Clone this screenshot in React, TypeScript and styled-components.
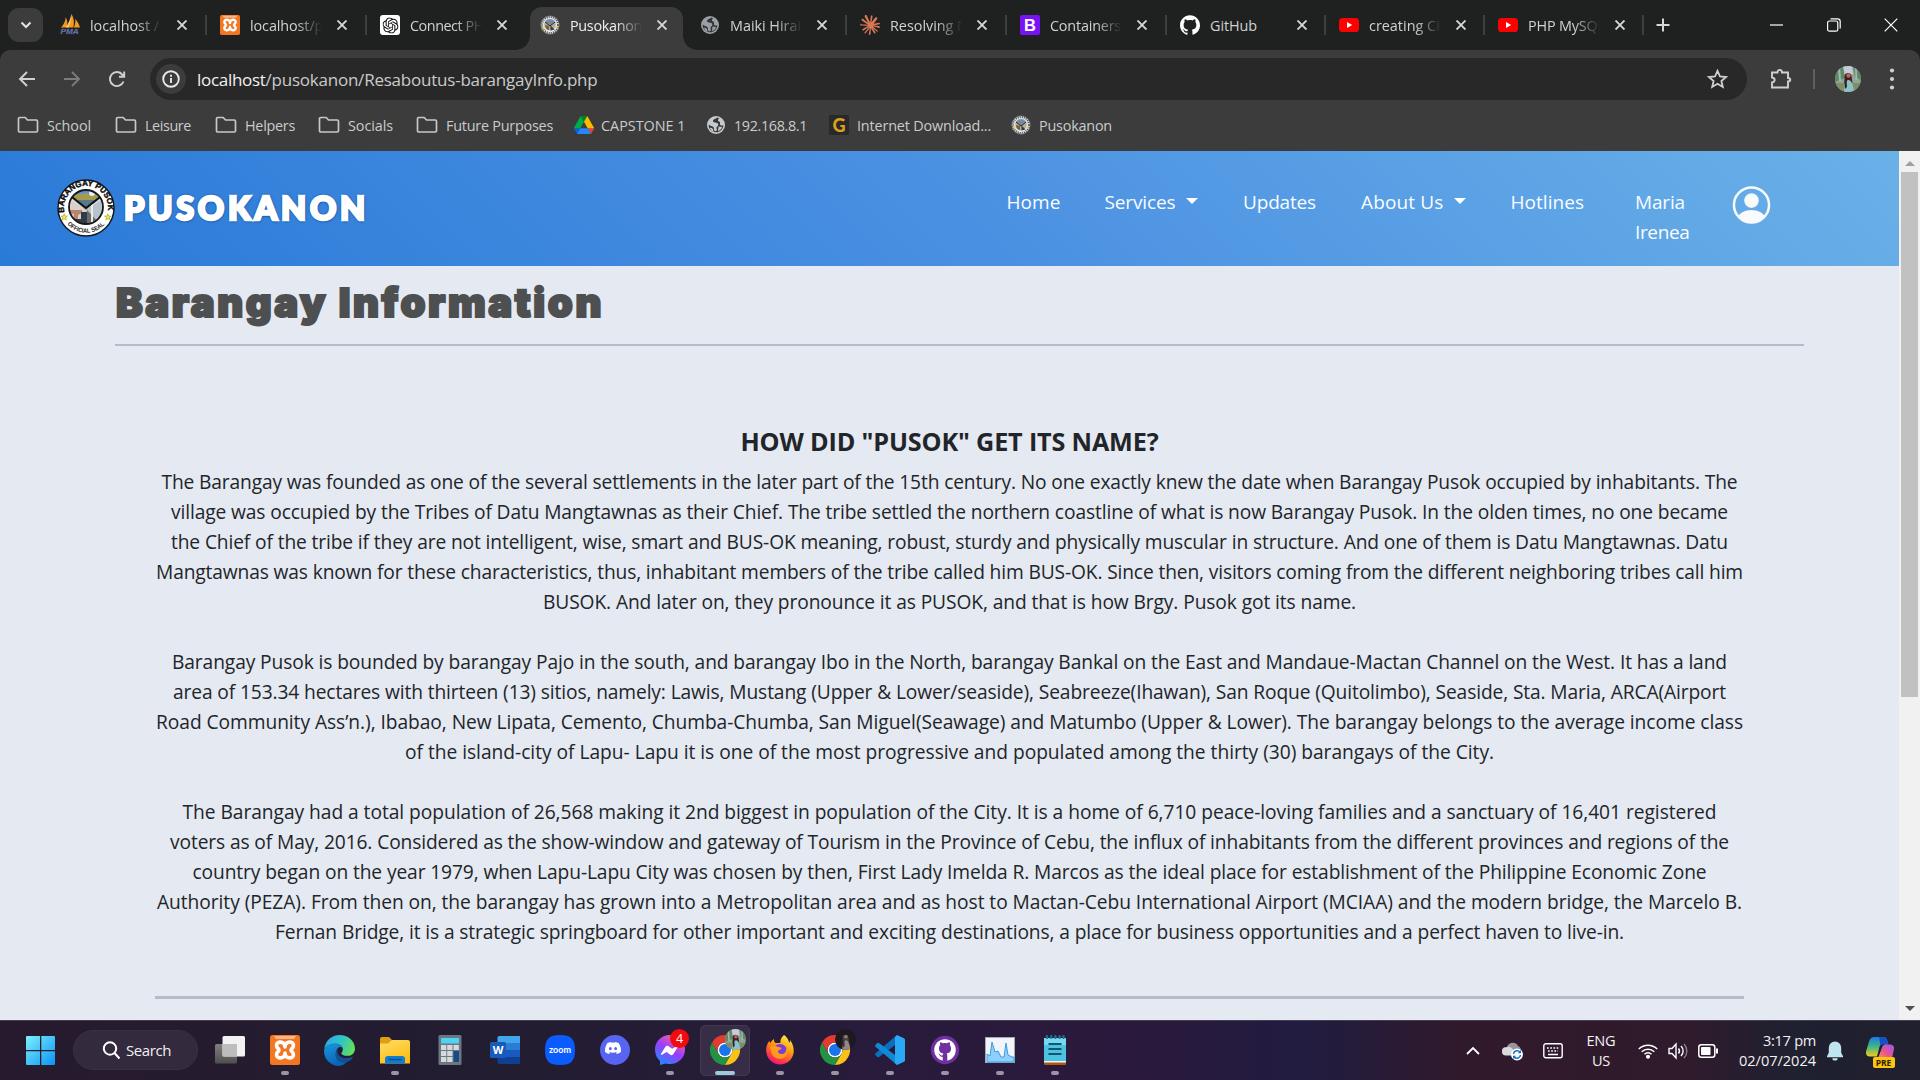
import React, { useLayoutEffect, useRef, useState } from "react";
import styled, { createGlobalStyle, css } from "styled-components";
import { SiOpenai, SiGithub, SiDiscord, SiClaude } from "react-icons/si";

const UI = `"Open Sans", "Noto Sans", sans-serif`;

const Global = createGlobalStyle`
  * { box-sizing: border-box; }
  html, body { margin: 0; padding: 0; height: 100%; overflow: hidden; }
  body { font-family: ${UI}; background: #e5e9f1; }
  svg { display: block; flex: none; }
`;

/* ---------- text that tracks itself to a given measure ---------- */

const FitBox = styled.span<{ $w: number }>`
  display: block;
  width: ${(p) => p.$w}px;
  white-space: nowrap;
  flex: none;
`;
const FitInner = styled.span`
  display: inline-block;
  white-space: nowrap;
`;

function Fit({ w, children }: { w: number; children: string }) {
  const ref = useRef<HTMLSpanElement>(null);
  const [spacing, setSpacing] = useState(0);
  useLayoutEffect(() => {
    if (!ref.current) return;
    const natural = ref.current.getBoundingClientRect().width;
    setSpacing((w - natural) / children.length);
  }, [w, children]);
  return (
    <FitBox $w={w}>
      <FitInner ref={ref} style={{ letterSpacing: `${spacing}px` }}>{children}</FitInner>
    </FitBox>
  );
}

/* ---------- icons ---------- */

const Seal = ({ size }: { size: number }) => (
  <svg width={size} height={size} viewBox="0 0 58 58">
    <defs>
      <path id="sealTop" d="M8.100 35.800 A22 22 0 1 1 49.900 35.800" />
      <path id="sealBottom" d="M5.700 37.500 A24.800 24.800 0 0 0 52.300 37.500" />
      <clipPath id="sealClip"><circle cx="29" cy="28" r="17" /></clipPath>
    </defs>
    <circle cx="29" cy="29" r="28" fill="#fff" stroke="#15171b" strokeWidth="1.400" />
    <g clipPath="url(#sealClip)">
      <rect x="10" y="8" width="38" height="40" fill="#e4dfdc" />
      <path d="M13 8h32v10L29 31 13 18z" fill="#5a8fe0" />
      <path d="M14 18c6-5 10-2 15-4 5 1 9 0 14 3L29 31z" fill="#a59a4e" />
      <path d="M20 21h18l-9 9z" fill="#557a8b" />
      <circle cx="35" cy="14" r="3" fill="#e8eefc" />
      <path d="M11 19l18 12v16H11z" fill="#d9cfcb" />
      <path d="M12 31h13v3l-4 2v4h-4v-5l-5-1z" fill="#b98470" />
      <path d="M11 40h18v8H11z" fill="#453a34" />
      <path d="M47 19L29 31v16h18z" fill="#b9c3cc" />
      <path d="M30 31l14 15H30z" fill="#6e6a66" />
      <path d="M34 26l2-2v20h-2z" fill="#e9eaec" />
      <path d="M24 33h6v12h-6z" fill="#2d3b4c" />
    </g>
    <path d="M15 18l14 11 14-11" fill="none" stroke="#111" strokeWidth="1.800" />
    <circle cx="29" cy="28" r="17" fill="none" stroke="#15171b" strokeWidth="1.800" />
    <text fontFamily="Liberation Sans" fontWeight="700" fontSize="8.200" fill="#0b0b0b" stroke="#0b0b0b" strokeWidth=".4">
      <textPath href="#sealTop" startOffset="2.500" textLength="76" lengthAdjust="spacingAndGlyphs">BARANGAY PUSOK</textPath>
    </text>
    <text fontFamily="Liberation Sans" fontWeight="700" fontSize="6.200" fill="#222">
      <textPath href="#sealBottom" startOffset="9" textLength="42" lengthAdjust="spacingAndGlyphs">OFFICIAL SEAL</textPath>
    </text>
    {[7.200, 50.800].map((x) => (
      <path key={x} transform={`translate(${x} 38)`} d="M0-3.200l.9 2.200 2.400.1-1.900 1.500.7 2.400L0 1.700-2.100 3l.7-2.400-1.900-1.500 2.400-.1z" fill="#f4ee25" stroke="#77721e" strokeWidth=".4" />
    ))}
  </svg>
);

const MiniSeal = () => (
  <svg width="20" height="20" viewBox="0 0 20 20">
    <circle cx="10" cy="10" r="9.300" fill="#e8e8e8" stroke="#55585c" strokeWidth=".8" />
    <circle cx="10" cy="10" r="7.900" fill="none" stroke="#4b4b4b" strokeWidth="1.800" strokeDasharray="1 1.100" />
    <circle cx="10" cy="9.600" r="5.800" fill="#b0aca8" />
    <path d="M5.300 6.500a6 6 0 0 1 9.400 0l-4.700 4z" fill="#5f90dc" />
    <path d="M6 7c2-1.500 3-.5 4-.8l3 .8-3 3z" fill="#8d8a55" />
    <path d="M5 10l4 1v4c-2 0-4-2-4-5z" fill="#7a5d45" />
    <path d="M10.500 10.500l4 4-4 1z" fill="#35393f" />
    <path d="M5 7l5 4 5-4" stroke="#222" fill="none" />
    <path d="M2.500 11.500h2v2h-2zM15.500 11.500h2v2h-2z" fill="#e6dc3a" />
  </svg>
);

const Pma = () => (
  <svg width="20" height="22" viewBox="0 0 21 23">
    <path d="M1 14C4 11 6 7 6 3c2 4 2 7 1 11zM7 14c3-4 5-9 5-14 3 5 3 10 2 14zM14.500 14c1.500-3 2-6 1.500-9 2.500 3 4 6 5 9z" fill="#f39a1f" />
    <path d="M12 0c-1 5-3 10-6 14h3c2-4 3-9 3-14z" fill="#f9c77a" />
    <text x=".5" y="21" fontFamily="Liberation Sans" fontWeight="700" fontStyle="italic" fontSize="8" textLength="19" lengthAdjust="spacingAndGlyphs" fill="#7f8bcb" stroke="#3d4478" strokeWidth=".3">PMA</text>
  </svg>
);

const Xampp = ({ size }: { size: number }) => (
  <svg width={size} height={size} viewBox="0 0 30 30">
    <rect width="30" height="30" rx="2.500" fill="#f37623" />
    <path d="M4 1h22l-2 3H6z" fill="#fbb686" />
    <path
      d="M15 12C15 6 6.500 5.500 6.500 10.500C6.500 13 9 13.500 9 15C9 16.500 6.500 17 6.500 19.500C6.500 24.500 15 24 15 18C15 24 23.500 24.500 23.500 19.500C23.500 17 21 16.500 21 15C21 13.500 23.500 13 23.500 10.500C23.500 5.500 15 6 15 12z"
      fill="none" stroke="#fff" strokeWidth="3.600" strokeLinejoin="round"
    />
  </svg>
);

const Globe = ({ color }: { color: string }) => (
  <svg width="20" height="20" viewBox="0 0 20 20">
    <circle cx="10" cy="10" r="9" fill={color} />
    <path d="M11.500 2.600C9 4.200 8 4 7.200 5.200c-.8 1.300.3 2 1.900 2.300 1.700.3 3 .4 3.200 1.900.2 1.700-1.600 1.700-1.800 3-.1 1.200 1 2.300-.3 3.600-.8.800-1.700.2-2-.8-.5-1.600.2-2.300-.9-3.300C6 10.900 4 11 2.700 9.500 2.400 13 5 17.300 10 17.300c4.200 0 7.300-3.300 7.300-7.300-1 .8-2.100.9-3-.1-.9-1.200.2-1.800-.5-2.900-.7-1-1.900-.5-1.900-1.800 0-.8.500-1.300 1.500-1.500z" fill="#343739" />
    <path d="M4 13c1.500-.6 3 .5 3.200 2l.3 2C6 16.400 4.700 15 4 13zM12.500 11.500l3.500.5c-.3 2-2 3.500-4 4.300z" fill={color} />
  </svg>
);

const Bootstrap = () => (
  <svg width="20" height="20" viewBox="0 0 20 20">
    <rect width="20" height="20" rx="2" fill="#7a12f6" />
    <text x="10" y="15.800" textAnchor="middle" fontFamily="Liberation Sans" fontWeight="700" fontSize="16.500" fill="#fff">B</text>
  </svg>
);

const YouTube = () => (
  <svg width="20" height="20" viewBox="0 0 20 20">
    <rect y="3" width="20" height="14" rx="3.600" fill="#f00" />
    <path d="M8 7l5.200 3L8 13z" fill="#fff" />
  </svg>
);

const Openai = () => (
  <svg width="20" height="20" viewBox="0 0 20 20">
    <rect width="20" height="20" rx="3" fill="#fff" />
    <SiOpenai x="2.500" y="2.500" width="15" height="15" color="#111" />
  </svg>
);

const Folder = () => (
  <svg width="22" height="18" viewBox="0 0 22 18" fill="none" stroke="#c7c7c7" strokeWidth="1.700" strokeLinejoin="round">
    <path d="M1.500 2.800c0-.8.500-1.300 1.300-1.300h5.400l2.300 2.500h8.700c.8 0 1.300.5 1.300 1.300v9.400c0 .8-.5 1.300-1.300 1.300H2.800c-.8 0-1.300-.5-1.300-1.300z" />
  </svg>
);

const Drive = () => (
  <svg width="20" height="18" viewBox="0 0 87.300 78">
    <path d="M6.600 66.850l3.850 6.650c.8 1.400 1.950 2.500 3.300 3.300L27.500 53H0c0 1.550.4 3.100 1.200 4.500z" fill="#0066da" />
    <path d="M43.650 25L29.900 1.200c-1.350.8-2.500 1.900-3.300 3.300L1.200 48.500C.4 49.900 0 51.450 0 53h27.500z" fill="#00ac47" />
    <path d="M73.550 76.800c1.350-.8 2.500-1.900 3.300-3.300l1.600-2.750L86.100 57.500c.8-1.400 1.200-2.950 1.200-4.500H59.800l5.850 11.500z" fill="#ea4335" />
    <path d="M43.650 25L57.400 1.200C56.050.4 54.500 0 52.900 0H34.400c-1.600 0-3.150.45-4.500 1.200z" fill="#00832d" />
    <path d="M59.800 53H27.500L13.750 76.800c1.350.8 2.900 1.200 4.500 1.200h50.800c1.600 0 3.150-.45 4.500-1.200z" fill="#2684fc" />
    <path d="M73.400 26.500l-12.700-22c-.8-1.400-1.950-2.500-3.300-3.300L43.650 25 59.800 53h27.450c0-1.550-.4-3.100-1.200-4.500z" fill="#ffba00" />
  </svg>
);

const GIcon = () => (
  <svg width="20" height="20" viewBox="0 0 20 20">
    <rect width="20" height="20" rx="1" fill="#29292b" />
    <text x="10" y="16.500" textAnchor="middle" fontFamily="Lato" fontWeight="900" fontSize="18" fill="#dba21a">G</text>
  </svg>
);

const Cross = ({ s = 10, c = "#d6d8d8", w = 1.9 }: { s?: number; c?: string; w?: number }) => (
  <svg width={s} height={s} viewBox="0 0 10 10"><path d="M.5.5l9 9M9.500.5l-9 9" stroke={c} strokeWidth={(w * 10) / s} /></svg>
);

const Photo = ({ size, dark }: { size: number; dark?: boolean }) => (
  <svg width={size} height={size} viewBox="0 0 26 26">
    <defs><clipPath id={dark ? "phD" : "phL"}><circle cx="13" cy="13" r="13" /></clipPath></defs>
    <g clipPath={`url(#${dark ? "phD" : "phL"})`}>
      <rect width="26" height="26" fill={dark ? "#1d191f" : "#8fa596"} />
      {!dark && <path d="M0 0h8l2 12-10 4zM18 0h8v14l-6-3z" fill="#5d8a62" />}
      {!dark && <path d="M8 0h9l1 8-8 2z" fill="#c3ccd8" />}
      {!dark && <path d="M3 0h2l1 15H4zM20 0h1.500l1 14h-2z" fill="#a8b4ba" />}
      {!dark && <path d="M0 17h26v9H0z" fill="#7d8f66" />}
      <path d="M9.500 10c0-4 7-4 7 0l1 7h-8z" fill={dark ? "#4b4145" : "#3a2426"} />
      <circle cx="13.500" cy="9.500" r="2.200" fill={dark ? "#8d7d7d" : "#c25f55"} />
      <path d="M9 26c0-8 2-12 4.500-12s5 4 5.500 12z" fill={dark ? "#92868a" : "#8fc0c6"} />
      <path d="M9.500 15l2-3 .5 9-2 2z" fill={dark ? "#3a3236" : "#2c2226"} />
    </g>
  </svg>
);

const Chrome = () => (
  <svg width="30" height="30" viewBox="0 0 48 48">
    <circle cx="24" cy="24" r="12" fill="#fff" />
    <path d="M3.200 36A24 24 0 0 0 24 48l10.400-18A12 12 0 0 1 13.600 30L3.200 12a24 24 0 0 0 0 24z" fill="#229342" />
    <path d="M24 48a24 24 0 0 0 20.800-36H24a12 12 0 0 1 10.400 18z" fill="#fbc116" />
    <path d="M44.800 12a24 24 0 0 0-41.600 0l10.400 18A12 12 0 0 1 24 12z" fill="#e33b2e" />
    <circle cx="24" cy="24" r="9.500" fill="#1a73e8" />
  </svg>
);

const Start = () => (
  <svg width="30" height="30" viewBox="0 0 30 30">
    <defs><linearGradient id="win" x1="0" y1="0" x2="1" y2="1" gradientUnits="objectBoundingBox"><stop stopColor="#7df0fd" /><stop offset="1" stopColor="#0a93f5" /></linearGradient></defs>
    <path d="M1 0h13v14H0V1a1 1 0 0 1 1-1zM15.300 0H28a1 1 0 0 1 1 1v13H15.300zM0 15.300h14V29H1a1 1 0 0 1-1-1zM15.300 15.300H29V28a1 1 0 0 1-1 1H15.300z" fill="url(#win)" />
  </svg>
);
const TaskView = () => (
  <svg width="30" height="30" viewBox="0 0 30 30">
    <defs><linearGradient id="tv" x1="0" y1="0" x2="0" y2="1"><stop stopColor="#808080" /><stop offset="1" stopColor="#4f4f4f" /></linearGradient></defs>
    <rect y="9" width="22" height="19.500" rx="1.500" fill="url(#tv)" />
    <rect x="7.500" y="1" width="22.500" height="20.500" rx="1.500" fill="#f2f2f2" />
    <path d="M7.500 9H22v12.500H9a1.500 1.500 0 0 1-1.500-1.500z" fill="#bdbdbd" />
  </svg>
);
const Edge = () => (
  <svg width="31" height="31" viewBox="0 0 30 30">
    <defs>
      <linearGradient id="e1" x1="0" y1=".3" x2="1" y2=".6"><stop stopColor="#2aa9e6" /><stop offset=".5" stopColor="#2fc4c9" /><stop offset="1" stopColor="#66e052" /></linearGradient>
      <linearGradient id="e2" x1="0" y1="0" x2=".4" y2="1"><stop stopColor="#1799df" /><stop offset="1" stopColor="#0c62b5" /></linearGradient>
    </defs>
    <path d="M.3 13.300C1.300 5.500 7.500 0 15 0c8.500 0 15 6 15 13.200 0 4-3.200 7-7.200 7-4.200 0-6-1.700-6-2.600 0-.6 1.400-1.300 1.400-3.600 0-3.200-3-5.500-7-5.500-5 0-9 2-10.900 4.800z" fill="url(#e1)" />
    <path d="M.1 14.200C1.500 10.500 6 8.500 11 8.500c3.600 0 6.200 1.700 7 3.700-1.200-.8-3-.9-4.300.2-3.700 3.300-1.700 12.600 8.600 13.100C20 28.500 17.500 30 14.700 30 6.500 30-.6 23.500.1 14.200z" fill="url(#e2)" />
    <path d="M13.500 12.600c-4.700 4.400-2.600 13.600 5 14.200 4 .3 7.500-1.600 9.500-5 .3-.6-.2-1-.7-.7-5.600 2.700-13.700.9-14.300-4.600-.1-1.500.1-3 .5-3.900z" fill="#124f95" />
  </svg>
);
const Explorer = () => (
  <svg width="30" height="30" viewBox="0 0 30 30">
    <defs><linearGradient id="fx" x1="0" y1="0" x2=".5" y2="1"><stop stopColor="#ffdc66" /><stop offset="1" stopColor="#fdbf17" /></linearGradient></defs>
    <path d="M0 4a2 2 0 0 1 2-2h7l3.500 3.500L9 10H0z" fill="#e39d10" />
    <path d="M0 8.500h8L12 5h16a2 2 0 0 1 2 2v21.500H0z" fill="url(#fx)" />
    <path d="M5 28.500V24a3 3 0 0 1 3-3h14a3 3 0 0 1 3 3v4.500z" fill="#0f7dd2" />
    <path d="M9 24.500h12" stroke="#0a4d93" strokeWidth="1.400" strokeLinecap="round" />
  </svg>
);
const Calc = () => (
  <svg width="24" height="30" viewBox="0 0 24 30">
    <rect x=".5" width="23" height="30" rx="1.500" fill="#6c7780" />
    <rect x="3" y="3" width="18" height="5.500" rx=".5" fill="#4fd3f2" />
    {[10, 16, 22].map((y) => [3, 9.200, 15.500].map((x) => (
      (x < 15 || y < 15) && <rect key={`${x}-${y}`} x={x} y={y} width="5.300" height="5" fill="#d3d9de" />
    )))}
    <rect x="15.500" y="16" width="5.500" height="11" fill="#174b86" />
  </svg>
);
const Word = () => (
  <svg width="30" height="28" viewBox="0 0 30 28">
    <path d="M7.500 1.500A1.500 1.500 0 0 1 9 0h21v7.500H7.500z" fill="#41a5ee" />
    <path d="M7.500 7h22.500v7H7.500z" fill="#2b7cd3" /><path d="M7.500 14h22.500v7H7.500z" fill="#185abd" />
    <path d="M7.500 21h22.500v7H9a1.500 1.500 0 0 1-1.500-1.500z" fill="#103f91" />
    <rect y="6" width="16" height="16" rx="1.500" fill="#185abd" />
    <text x="8" y="18" textAnchor="middle" fontFamily="Open Sans" fontWeight="700" fontSize="11" fill="#fff">W</text>
  </svg>
);
const Zoom = () => (
  <svg width="30" height="30" viewBox="0 0 30 30">
    <path d="M15 0C26 0 30 4 30 15S26 30 15 30 0 26 0 15 4 0 15 0z" fill="#0b5cff" />
    <text x="15" y="17.500" textAnchor="middle" fontFamily="Lato" fontWeight="700" fontSize="8.500" textLength="22" lengthAdjust="spacingAndGlyphs" fill="#fff">zoom</text>
  </svg>
);
const Discord = () => (
  <svg width="30" height="30" viewBox="0 0 30 30"><circle cx="15" cy="15" r="15" fill="#5865f2" /><SiDiscord x="5" y="5" width="20" height="20" color="#fff" /></svg>
);
const Messenger = () => (
  <svg width="30" height="30" viewBox="0 0 30 30">
    <defs><linearGradient id="ms" x1=".2" y1="1" x2=".8" y2="0"><stop stopColor="#1b8dff" /><stop offset=".5" stopColor="#9a3cff" /><stop offset="1" stopColor="#ff6a80" /></linearGradient></defs>
    <path d="M15 0c8.500 0 15 6.200 15 14.500S23.500 29 15 29c-1.500 0-3-.2-4.300-.6L5 30v-4C2 23.500 0 19.500 0 14.500 0 6.200 6.500 0 15 0z" fill="url(#ms)" />
    <path d="M6 18.800l4.400-7c.7-1.100 2.200-1.400 3.200-.6l3.500 2.600 4.700-2.600c.6-.4 1.400.3 1 .9l-4.400 7c-.7 1.100-2.200 1.400-3.200.6l-3.500-2.600L7 19.800c-.6.300-1.400-.4-1-1z" fill="#fff" />
  </svg>
);
const Firefox = () => (
  <svg width="30" height="30" viewBox="0 0 30 30">
    <defs>
      <linearGradient id="ff" x1=".8" y1="0" x2=".3" y2="1"><stop stopColor="#fff04a" /><stop offset=".45" stopColor="#ff980e" /><stop offset=".8" stopColor="#ff3647" /><stop offset="1" stopColor="#e31587" /></linearGradient>
    </defs>
    <path d="M19 0c4 3 5 6 5 8 1-.8 1-2 1-3 3 4 4 8 3.700 12C28 24.500 22 29.500 15 29.500S1.500 24 1.200 16C1 11 3 8 4.500 5.500c0 1 .3 2 .8 2.500 1-1.500 1.700-2.500 3.700-4-.2 1.500.3 3 1.500 4 2 .2 4 0 5-.5C15 5 16.500 2 19 0z" fill="url(#ff)" />
    <circle cx="15" cy="16" r="7" fill="#7b3fd8" />
    <path d="M5 12c3-2 6-1 8 0 1.500 0 3.500.5 3.500 1.500-.5 1.500-3 1-3.500 2.500-.3 2 2 3.500 4.500 3 3-.7 4-3.500 3.500-6 2 2 2 6-.5 8.500-4 4-11 2.500-13.500-2z" fill="#ff9a1f" />
  </svg>
);
const VsCode = () => (
  <svg width="30" height="30" viewBox="0 0 30 30">
    <path d="M22 0v8.500L4 22l-1.500.2L.5 20c-.6-.5-.6-1.200 0-1.700z" fill="#0a6fbd" />
    <path d="M22 30v-8.500L4 8l-1.500-.2L.5 10c-.6.500-.6 1.200 0 1.700z" fill="#1389d6" />
    <path d="M22 0l7 3.200c.6.300 1 .9 1 1.600v20.400c0 .7-.4 1.300-1 1.600L22 30l-2-2V2z" fill="#29a8f5" />
  </svg>
);
const GithubDesktop = () => (
  <svg width="30" height="30" viewBox="0 0 30 30">
    <circle cx="15" cy="15" r="14.200" fill="#6f2fa0" />
    <circle cx="15" cy="15" r="10.800" fill="#fff" />
    <path d="M15 8c-1.200 0-2 .3-2 .3s-1.400-1-2.800-1c-.4 1.400-.1 2.300.1 2.700C9.300 11 9 12.200 9 13.500c0 3.600 2 4.700 4.400 5-.5.500-.7 1-.7 1.800-1 .4-2 .3-2.800-1-.5-.8-1.300-1-1.500-.7.900.5 1 1.700 1.600 2.500.6.800 1.700.8 2.700.6V26h4.600v-5.500c0-.9-.3-1.600-.7-2 2.400-.3 4.400-1.400 4.400-5 0-1.300-.4-2.400-1.200-3.400.1-.5.400-1.400 0-2.800-1.400 0-2.800 1-2.800 1S16.200 8 15 8z" fill="#6f2fa0" />
  </svg>
);
const Perf = () => (
  <svg width="30" height="26" viewBox="0 0 30 26">
    <rect x=".5" y=".5" width="29" height="25" fill="#f1f5f9" stroke="#a3adb6" />
    <path d="M2 25V17l3 2 2-14 3 10 3-1 3 6h3l2-14 2 12 4 2h2v5z" fill="#8fd0fa" stroke="#3a9be0" strokeWidth="1" />
  </svg>
);
const Notepad = () => (
  <svg width="24" height="30" viewBox="0 0 24 30">
    <rect x="1" y="25" width="22" height="5" rx="1" fill="#b4560c" /><rect x="1" y="23" width="22" height="4.500" fill="#f3f3f3" />
    <path d="M1 3h22v23H1z" fill="#4cc3e0" /><path d="M1 3h22v7H1z" fill="#76d9ef" />
    {[4, 8.200, 12.400, 16.600, 20.500].map((x) => <rect key={x} x={x - 1.200} y="0" width="2.400" height="4" rx="1.200" fill="#1b6f92" />)}
    <path d="M5.500 9h13M5.500 14h13M5.500 19h13" stroke="#0f5672" strokeWidth="2" />
  </svg>
);
const Copilot = () => (
  <svg width="28" height="28" viewBox="0 0 30 30">
    <defs>
      <linearGradient id="c1" x1="0" y1="0" x2="0" y2="1"><stop stopColor="#1d78ea" /><stop offset=".45" stopColor="#38b48a" /><stop offset="1" stopColor="#f2cb1d" /></linearGradient>
      <linearGradient id="c2" x1="1" y1="0" x2="0" y2="1"><stop stopColor="#9a57f0" /><stop offset=".6" stopColor="#e8568e" /><stop offset="1" stopColor="#fd9340" /></linearGradient>
    </defs>
    <path d="M9 0h9c3 0 4 1 4.800 4L24 8h-6c-2 0-3 1-3.500 3L12 21H4c-3.500 0-4.800-3-3.800-6l3-10C4.200 1.500 6 0 9 0z" fill="url(#c1)" />
    <path d="M14 0h4c3 0 4 1 4.800 4L24 8h-6c-1 0-2 .4-2.500 1z" fill="#1650c8" />
    <path d="M21 8h5c3.500 0 4.800 3 3.800 6L28 22H13l4-11c.7-2 2-3 4-3z" fill="url(#c2)" />
    <path d="M18 8h3c-2 0-3.300 1-4 3l-3.500 10H12L14.500 11C15 9 16 8 18 8z" fill="#14213a" />
  </svg>
);

/* ---------- browser chrome ---------- */

const Screen = styled.div`
  width: 1920px;
  height: 1080px;
  display: flex;
  flex-direction: column;
  overflow: hidden;
`;
const BrowserTop = styled.div`
  background: #1f2120;
`;

const TabStrip = styled.header`
  height: 51px;
  display: flex;
  align-items: flex-start;
  padding-left: 8px;
`;
const TabSearch = styled.div`
  width: 35px;
  height: 34px;
  margin: 8px 5px 0 0;
  border-radius: 11px;
  background: #3c3c3c;
  display: grid;
  place-items: center;
`;
const Tab = styled.div<{ $active?: boolean; $bar?: boolean; $narrow?: boolean }>`
  position: relative;
  width: ${(p) => (p.$narrow ? 159 : 160)}px;
  height: 50px;
  flex: none;
  display: flex;
  align-items: center;
  padding-left: 12px;
  gap: 10px;
  isolation: isolate;
  ${(p) => p.$bar && css`
    &::after {
      content: "";
      position: absolute;
      right: 1px;
      top: 15px;
      width: 2px;
      height: 20px;
      background: #3e403f;
    }
  `}
  ${(p) => p.$active && css`
    &::before {
      content: "";
      position: absolute;
      z-index: -1;
      left: 2px;
      right: 5px;
      top: 7px;
      bottom: 0;
      background: #3c3c3c;
      border-radius: 12px 12px 0 0;
    }
  `}
`;
const TabFoot = styled.i<{ $side: "left" | "right" }>`
  position: absolute;
  bottom: 0;
  width: 14px;
  height: 14px;
  ${(p) => (p.$side === "left" ? "left: -12px" : "right: -9px")};
  background: radial-gradient(circle at ${(p) => (p.$side === "left" ? "0 0" : "100% 0")}, transparent 13.500px, #3c3c3c 14px);
`;
const TabTitle = styled.span<{ $active?: boolean; $fade: boolean }>`
  width: 72px;
  overflow: hidden;
  white-space: nowrap;
  padding-top: 1px;
  font-size: 14.400px;
  line-height: 20px;
  color: ${(p) => (p.$active ? "#eee" : "#d0d2d1")};
  ${(p) => p.$fade && css`mask-image: linear-gradient(90deg, #000 64%, transparent 100%);`}
`;
const TabClose = styled.span`
  display: grid;
  margin-left: 5px;
`;
const NewTab = styled.div`
  padding: 18px 0 0 11px;
`;
const WindowControls = styled.div`
  margin-left: auto;
  height: 49px;
  display: flex;
  align-items: center;
  & > span { width: 57.500px; display: grid; place-items: center; }
`;

const Toolbar = styled.div`
  height: 51px;
  margin-top: -1px;
  padding: 8px 0 0 18px;
  background: #3c3c3c;
  border-radius: 10px 10px 0 0;
  display: flex;
  align-items: flex-start;
`;
const ToolIcon = styled.span<{ $w: number }>`
  width: ${(p) => p.$w}px;
  height: 42px;
  display: flex;
  align-items: center;
  flex: none;
`;
const Omnibox = styled.div`
  width: 1597px;
  height: 42px;
  flex: none;
  border-radius: 21px;
  background: #282828;
  display: flex;
  align-items: center;
  padding: 0 19px 0 6px;
  font-size: 17px;
  color: #c9cbcc;
`;
const InfoDisc = styled.span`
  width: 30px;
  height: 30px;
  border-radius: 50%;
  background: #3c3c3c;
  display: grid;
  place-items: center;
  margin-right: 11px;
`;
const Url = styled.span`
  display: flex;
  flex: 1;
  & > :first-child { color: #f2f2f2; }
`;
const ToolRule = styled.i`
  width: 2px;
  height: 20px;
  margin: 11px 20px 0 21px;
  background: #5f6061;
`;

const Bookmarks = styled.nav`
  height: 50px;
  background: #3c3c3c;
  padding: 0 0 2px 17px;
  display: flex;
  align-items: center;
  color: #c9cbcc;
  font-size: 14.400px;
`;
const Bookmark = styled.div<{ $w: number; $gap: number }>`
  width: ${(p) => p.$w}px;
  display: flex;
  align-items: center;
  gap: ${(p) => p.$gap}px;
  flex: none;
`;

/* ---------- page ---------- */

const Viewport = styled.main`
  height: 869px;
  display: flex;
`;
const Page = styled.div`
  width: 1899px;
  background: #e5e9f1;
`;
const Scrollbar = styled.aside`
  width: 21px;
  background: #f1f1f1;
  display: flex;
  flex-direction: column;
  align-items: center;
`;
const Arrow = styled.i<{ $up?: boolean }>`
  height: 21px;
  display: flex;
  align-items: center;
  &::before {
    content: "";
    border: 5.500px solid transparent;
    ${(p) => (p.$up ? "border-top: 0; border-bottom: 5.500px solid #a0a0a0; margin-top: 4px;" : "border-bottom: 0; border-top: 5.500px solid #505050; margin-top: -3px;")}
  }
`;
const Thumb = styled.i`
  width: 17px;
  height: 525px;
  background: #c1c1c1;
  margin-bottom: auto;
`;

const Navbar = styled.header`
  height: 115px;
  padding: 28px 0 0 57px;
  background: linear-gradient(45deg, #2a7ad8 0%, #4a90e2 50%, #6ab1e8 100%);
  display: flex;
  align-items: flex-start;
`;
const Brand = styled.a`
  display: flex;
  width: 949.500px;
`;
const BrandName = styled.span`
  margin: 7px 0 0 9px;
  font-family: Lato, sans-serif;
  font-weight: 900;
  font-size: 32.500px;
  line-height: 44px;
  color: #fff;
  -webkit-text-stroke: 2.600px #fff;
  text-shadow: 0 0 3px #1c5fae, 2px 0 1px #2462ab, -2px 0 1px #2462ab, 0 2px 1px #2462ab, 0 -2px 1px #2462ab, 1px 2px 2px #2462ab;
`;
const NavItem = styled.div<{ $w: number }>`
  width: ${(p) => p.$w}px;
  margin-top: 8px;
  display: flex;
  flex-wrap: wrap;
  align-content: flex-start;
  flex: none;
  font-size: 19px;
  line-height: 30px;
  color: #fafcff;
`;
const Caret = styled.i`
  margin: 11px 0 0 10.500px;
  border: 6px solid transparent;
  border-top-color: #fff;
  border-bottom: 0;
  height: 0;
`;
const UserIcon = styled.span`
  padding-top: 6px;
`;

const Title = styled.h1`
  margin: 0 95px 0 115px;
  height: 80px;
  padding: 9px 0 0 1px;
  border-bottom: 2px solid #b7bbc7;
  font-family: Inter, sans-serif;
  font-weight: 900;
  font-size: 40px;
  line-height: 55px;
  color: #4e4f50;
  -webkit-text-stroke: 2.200px #4e4f50;
`;
const Article = styled.article`
  width: 1589px;
  margin: 77px 0 0 155px;
  display: flex;
  flex-direction: column;
  align-items: center;
  color: #212529;
  font-size: 19.200px;
  line-height: 30px;
`;
const Subhead = styled.h2`
  margin: 0 0 8px;
  font-size: 25.200px;
  line-height: 36px;
  font-weight: 700;
`;
const Paragraph = styled.p`
  margin: 0 0 30px;
  display: flex;
  flex-direction: column;
  align-items: center;
`;
const Rule = styled.hr`
  width: 100%;
  height: 3px;
  margin: 19px 0 0;
  border: 0;
  background: #b7bbc7;
`;

/* ---------- taskbar ---------- */

const Taskbar = styled.footer`
  height: 60px;
  border-top: 1px solid #45404f;
  background: linear-gradient(90deg, #271a2e 0%, #221d31 26%, #281b3b 45%, #2b193c 58%, #211c40 68%, #30192b 76%, #2f1b2c 88%, #1f2030 93%, #20202e 100%);
  display: flex;
  align-items: stretch;
  padding-left: 26px;
`;
const StartCell = styled.div`
  width: 47px;
  padding-top: 15px;
`;
const Search = styled.div`
  width: 125px;
  height: 40px;
  margin: 9px 4px 0 0;
  border-radius: 20px;
  border: 1px solid #393141;
  background: #332b3d;
  display: flex;
  align-items: center;
  gap: 5px;
  padding-left: 28px;
  font-size: 15px;
  color: #f1eff3;
`;
const TaskApp = styled.div<{ $active?: boolean; $running?: boolean }>`
  position: relative;
  width: 55px;
  height: 59px;
  padding-bottom: 1px;
  display: grid;
  place-items: center;
  isolation: isolate;
  ${(p) => p.$active && css`
    &::before {
      content: "";
      position: absolute;
      z-index: -1;
      inset: 4px 2.500px;
      border-radius: 5px;
      background: #382d47;
      border: 1px solid #43394f;
    }
  `}
  ${(p) => p.$running && css`
    &::after {
      content: "";
      position: absolute;
      bottom: 5px;
      left: calc(50% - ${p.$active ? 10 : 4}px);
      width: ${p.$active ? 20 : 8}px;
      height: 4px;
      border-radius: 2px;
      background: ${p.$active ? "#9cc9dd" : "#9b94a3"};
    }
  `}
`;
const Overlay = styled.span<{ $x: number; $y: number }>`
  position: absolute;
  left: ${(p) => p.$x}px;
  top: ${(p) => p.$y}px;
`;
const Count = styled.span`
  width: 19px;
  height: 19px;
  border-radius: 50%;
  background: #f20a0f;
  color: #fff;
  font-size: 12.500px;
  display: grid;
  place-items: center;
`;
const Tray = styled.div`
  margin-left: auto;
  display: flex;
  align-items: center;
  color: #f4f1f4;
  font-size: 14.600px;
  line-height: 19.500px;
`;
const TrayCell = styled.div<{ $w: number; $end?: boolean }>`
  width: ${(p) => p.$w}px;
  display: flex;
  flex-direction: column;
  align-items: ${(p) => (p.$end ? "flex-end" : "center")};
`;
const CopilotCell = styled.div`
  position: relative;
  width: 65.500px;
  padding-left: 11px;
`;
const Pre = styled.span`
  width: 22px;
  height: 11px;
  border-radius: 2px;
  background: #fbc511;
  color: #2a2000;
  font-size: 8.500px;
  font-weight: 700;
  line-height: 11px;
  display: grid;
  place-items: center;
`;

const tabs = [
  { icon: <Pma />, title: "localhost /", bar: true, w: 69 },
  { icon: <Xampp size={20} />, title: "localhost/ph", bar: true, w: 82 },
  { icon: <Openai />, title: "Connect PHP", w: 82 },
  { icon: <MiniSeal />, title: "Pusokanon", active: true, w: 72 },
  { icon: <Globe color="#9aa0a6" />, title: "Maiki Hirai", w: 71, bar: true },
  { icon: <SiClaude size={20} color="#d97757" />, title: "Resolving M", bar: true, w: 80 },
  { icon: <Bootstrap />, title: "Containers", bar: true, w: 71 },
  { icon: <SiGithub size={20} color="#fff" />, title: "GitHub", bar: true, w: 47 },
  { icon: <YouTube />, title: "creating CR", bar: true, w: 76 },
  { icon: <YouTube />, title: "PHP MySQL", bar: true, w: 77 },
];

const bookmarks = [
  { icon: <Folder />, label: "School", w: 98, t: 44, gap: 8 },
  { icon: <Folder />, label: "Leisure", w: 100, t: 46, gap: 8 },
  { icon: <Folder />, label: "Helpers", w: 103, t: 50, gap: 8 },
  { icon: <Folder />, label: "Socials", w: 98, t: 45, gap: 8 },
  { icon: <Folder />, label: "Future Purposes", w: 158, t: 107, gap: 8 },
  { icon: <Drive />, label: "CAPSTONE 1", w: 132, t: 84.500, gap: 7 },
  { icon: <Globe color="#c7cacd" />, label: "192.168.8.1", w: 123, t: 73, gap: 8 },
  { icon: <GIcon />, label: "Internet Download...", w: 182, t: 134, gap: 8 },
  { icon: <MiniSeal />, label: "Pusokanon", w: 110, t: 73, gap: 8 },
];

const paragraphs: [string, number][][] = [
  [
    ["The Barangay was founded as one of the several settlements in the later part of the 15th century. No one exactly knew the date when Barangay Pusok occupied by inhabitants. The", 1576],
    ["village was occupied by the Tribes of Datu Mangtawnas as their Chief. The tribe settled the northern coastline of what is now Barangay Pusok. In the olden times, no one became", 1557],
    ["the Chief of the tribe if they are not intelligent, wise, smart and BUS-OK meaning, robust, sturdy and physically muscular in structure. And one of them is Datu Mangtawnas. Datu", 1557],
    ["Mangtawnas was known for these characteristics, thus, inhabitant members of the tribe called him BUS-OK. Since then, visitors coming from the different neighboring tribes call him", 1587],
    ["BUSOK. And later on, they pronounce it as PUSOK, and that is how Brgy. Pusok got its name.", 813],
  ],
  [
    ["Barangay Pusok is bounded by barangay Pajo in the south, and barangay Ibo in the North, barangay Bankal on the East and Mandaue-Mactan Channel on the West. It has a land", 1555],
    ["area of 153.34 hectares with thirteen (13) sitios, namely: Lawis, Mustang (Upper & Lower/seaside), Seabreeze(Ihawan), San Roque (Quitolimbo), Seaside, Sta. Maria, ARCA(Airport", 1553],
    ["Road Community Ass’n.), Ibabao, New Lipata, Cemento, Chumba-Chumba, San Miguel(Seawage) and Matumbo (Upper & Lower). The barangay belongs to the average income class", 1587],
    ["of the island-city of Lapu- Lapu it is one of the most progressive and populated among the thirty (30) barangays of the City.", 1089],
  ],
  [
    ["The Barangay had a total population of 26,568 making it 2nd biggest in population of the City. It is a home of 6,710 peace-loving families and a sanctuary of 16,401 registered", 1534],
    ["voters as of May, 2016. Considered as the show-window and gateway of Tourism in the Province of Cebu, the influx of inhabitants from the different provinces and regions of the", 1559],
    ["country began on the year 1979, when Lapu-Lapu City was chosen by then, First Lady Imelda R. Marcos as the ideal place for establishment of the Philippine Economic Zone", 1514],
    ["Authority (PEZA). From then on, the barangay has grown into a Metropolitan area and as host to Mactan-Cebu International Airport (MCIAA) and the modern bridge, the Marcelo B.", 1585],
    ["Fernan Bridge, it is a strategic springboard for other important and exciting destinations, a place for business opportunities and a perfect haven to live-in.", 1349],
  ],
];

const apps: { icon: React.ReactNode; running?: boolean; active?: boolean; over?: React.ReactNode; x?: number; y?: number }[] = [
  { icon: <TaskView /> },
  { icon: <Xampp size={30} />, running: true },
  { icon: <Edge /> },
  { icon: <Explorer />, running: true },
  { icon: <Calc /> },
  { icon: <Word /> },
  { icon: <Zoom /> },
  { icon: <Discord /> },
  { icon: <Messenger />, running: true, over: <Count>4</Count>, x: 28, y: 8 },
  { icon: <Chrome />, running: true, active: true, over: <Photo size={21} />, x: 28, y: 8 },
  { icon: <Firefox />, running: true },
  { icon: <Chrome />, running: true, over: <Photo size={21} dark />, x: 28, y: 8 },
  { icon: <VsCode />, running: true },
  { icon: <GithubDesktop />, running: true },
  { icon: <Perf />, running: true },
  { icon: <Notepad />, running: true },
];

const stroke = { fill: "none", stroke: "#cfd0d0", strokeWidth: 1.9 };

export default function App() {
  return (
    <Screen>
      <Global />
      <BrowserTop>
        <TabStrip>
          <TabSearch>
            <svg width="12" height="8" viewBox="0 0 12 8"><path d="M1.500 1.500L6 6l4.500-4.500" fill="none" stroke="#e3e3e3" strokeWidth="2" /></svg>
          </TabSearch>
          {tabs.map((t, i) => (
            <Tab key={i} $active={t.active} $bar={t.bar} $narrow={i >= 7}>
              {t.active && <><TabFoot $side="left" /><TabFoot $side="right" /></>}
              {t.icon}
              <TabTitle $active={t.active} $fade={t.title !== "GitHub"}><Fit w={t.w}>{t.title}</Fit></TabTitle>
              <TabClose><Cross /></TabClose>
            </Tab>
          ))}
          <NewTab><svg width="14" height="14" viewBox="0 0 14 14"><path d="M7 .5v13M.5 7h13" stroke="#d6d8d8" strokeWidth="2" /></svg></NewTab>
          <WindowControls>
            <span><svg width="13" height="2"><path d="M0 1h13" stroke="#fff" strokeWidth="1.200" /></svg></span>
            <span><svg width="14" height="14" viewBox="0 0 14 14" fill="none" stroke="#fff" strokeWidth="1.200"><rect x=".6" y="3" width="10.200" height="10.200" rx="1.800" /><path d="M3.500.8h7a2.700 2.700 0 0 1 2.700 2.700v7" /></svg></span>
            <span><Cross s={14} c="#fff" w={1.2} /></span>
          </WindowControls>
        </TabStrip>

        <Toolbar>
          <ToolIcon $w={45}><svg width="18" height="18" viewBox="0 0 18 18" {...stroke}><path d="M17 9H2.500M9 2L2 9l7 7" /></svg></ToolIcon>
          <ToolIcon $w={45}><svg width="18" height="18" viewBox="0 0 18 18" {...stroke} stroke="#7b7c7c"><path d="M1 9h14.500M9 2l7 7-7 7" /></svg></ToolIcon>
          <ToolIcon $w={42}><svg width="18" height="18" viewBox="0 0 18 18" {...stroke}><path d="M15.500 11.500A7 7 0 1 1 14.500 4.800L16 6.500M16.200 1.500v5.200H11" /></svg></ToolIcon>
          <Omnibox>
            <InfoDisc><svg width="18" height="18" viewBox="0 0 18 18" {...stroke} stroke="#e8e8e8"><circle cx="9" cy="9" r="7.800" /><path d="M9 8v5M9 4.800v2" /></svg></InfoDisc>
            <Url><Fit w={68.5}>localhost</Fit><Fit w={332}>/pusokanon/Resaboutus-barangayInfo.php</Fit></Url>
            <svg width="21" height="20" viewBox="0 0 21 20" {...stroke} strokeWidth="1.800"><path d="M10.500 1.800l2.500 5.700 6 .5-4.600 4 1.400 6-5.300-3.200L5.200 18l1.400-6L2 8l6-.5z" /></svg>
          </Omnibox>
          <ToolIcon $w={45}><svg width="46" height="22" viewBox="0 0 46 22" {...stroke}><path d="M25 4.500h5.500c0-3.500 4.500-3.500 4.500 0H41v5.500c3 0 3 3.500 0 3.500v6H25v-5c3.500-.5 3.500-4.500 0-5z" /></svg></ToolIcon>
          <ToolRule />
          <ToolIcon $w={53}><Photo size={26} /></ToolIcon>
          <ToolIcon $w={20}><svg width="8" height="22" viewBox="0 0 8 22" fill="#cfd0d0"><circle cx="4" cy="2.500" r="2.100" /><circle cx="4" cy="11" r="2.100" /><circle cx="4" cy="19.500" r="2.100" /></svg></ToolIcon>
        </Toolbar>

        <Bookmarks>
          {bookmarks.map((b) => (
            <Bookmark key={b.label} $w={b.w} $gap={b.gap}>{b.icon}<Fit w={b.t}>{b.label}</Fit></Bookmark>
          ))}
        </Bookmarks>
      </BrowserTop>

      <Viewport>
        <Page>
          <Navbar>
            <Brand><Seal size={58} /><BrandName><Fit w={245}>PUSOKANON</Fit></BrandName></Brand>
            <NavItem $w={98}><Fit w={54}>Home</Fit></NavItem>
            <NavItem $w={138.5}><Fit w={71}>Services</Fit><Caret /></NavItem>
            <NavItem $w={118}><Fit w={73}>Updates</Fit></NavItem>
            <NavItem $w={149.5}><Fit w={82.5}>About Us</Fit><Caret /></NavItem>
            <NavItem $w={124.5}><Fit w={73.5}>Hotlines</Fit></NavItem>
            <NavItem $w={97}><Fit w={50}>Maria</Fit><Fit w={54.5}>Irenea</Fit></NavItem>
            <UserIcon>
              <svg width="39" height="40" viewBox="0 0 40 40">
                <defs><clipPath id="user"><circle cx="20" cy="20" r="18.500" /></clipPath></defs>
                <circle cx="20" cy="20" r="18" fill="none" stroke="#f8fafc" strokeWidth="2.600" />
                <g clipPath="url(#user)" fill="#f8fafc"><circle cx="20" cy="15.500" r="7.500" /><ellipse cx="20" cy="36" rx="15" ry="11" /></g>
              </svg>
            </UserIcon>
          </Navbar>
          <Title><Fit w={488}>Barangay Information</Fit></Title>
          <Article>
            <Subhead><Fit w={418}>HOW DID "PUSOK" GET ITS NAME?</Fit></Subhead>
            {paragraphs.map((lines, i) => (
              <Paragraph key={i}>{lines.map(([text, w]) => <Fit key={text} w={w}>{text}</Fit>)}</Paragraph>
            ))}
            <Rule />
          </Article>
        </Page>
        <Scrollbar><Arrow $up /><Thumb /><Arrow /></Scrollbar>
      </Viewport>

      <Taskbar>
        <StartCell><Start /></StartCell>
        <Search>
          <svg width="19" height="19" viewBox="0 0 19 19" fill="none" stroke="#fff" strokeWidth="2"><circle cx="8" cy="7.500" r="6.200" /><path d="M12.500 12l5 5.500" /></svg>
          <Fit w={45}>Search</Fit>
        </Search>
        {apps.map((a, i) => (
          <TaskApp key={i} $active={a.active} $running={a.running}>
            {a.icon}
            {a.over && <Overlay $x={a.x!} $y={a.y!}>{a.over}</Overlay>}
          </TaskApp>
        ))}
        <Tray>
          <TrayCell $w={40}><svg width="14" height="9" viewBox="0 0 14 9"><path d="M1 8l6-6 6 6" fill="none" stroke="#fff" strokeWidth="1.800" /></svg></TrayCell>
          <TrayCell $w={40}>
            <svg width="22" height="20" viewBox="0 0 22 20"><path d="M4 14a4 4 0 0 1 0-8h1a6 6 0 0 1 11-1 5 5 0 0 1 3 5v4z" fill="#99939b" /><path d="M4 14.500a4 4 0 0 1 0-8 5 5 0 0 1 7 2l1 6z" fill="#dcd9dd" /><circle cx="15" cy="13.500" r="6" fill="#fff" /><path d="M11.500 13a3.600 3.600 0 0 1 6.500-1.800M18.500 14a3.600 3.600 0 0 1-6.500 1.800" fill="none" stroke="#1272c4" strokeWidth="1.500" /><path d="M19 9v3.200h-3.200zM11 18v-3.200h3.200z" fill="#1272c4" /></svg>
          </TrayCell>
          <TrayCell $w={40}>
            <svg width="20" height="16" viewBox="0 0 20 16"><rect x=".8" y=".8" width="18.400" height="14" rx="2" fill="none" stroke="#fff" strokeWidth="1.400" /><path d="M4 5h12M5 8h10" stroke="#fff" strokeWidth="1.700" strokeDasharray="1.700 1.500" /><path d="M5 11.500h10" stroke="#fff" strokeWidth="1.500" /></svg>
          </TrayCell>
          <TrayCell $w={56}><Fit w={29}>ENG</Fit><Fit w={18}>US</Fit></TrayCell>
          <TrayCell $w={38}>
            <svg width="20" height="16" viewBox="0 0 20 16" fill="none" stroke="#fff" strokeWidth="1.500"><path d="M.8 6a13 13 0 0 1 18.400 0M3.700 8.700a9 9 0 0 1 12.600 0M6.500 11.300a5 5 0 0 1 7 0" /><circle cx="10" cy="13.700" r="1.300" fill="#fff" /></svg>
          </TrayCell>
          <TrayCell $w={22}>
            <svg width="20" height="18" viewBox="0 0 20 18" fill="none" stroke="#fff" strokeWidth="1.400"><path d="M1 6.500h3l4-4.500v14l-4-4.500H1z" /><path d="M10.500 6.500a4 4 0 0 1 0 5M13 4a7 7 0 0 1 0 10" /><path d="M16 2a10 10 0 0 1 0 14" stroke="#8b7d89" /></svg>
          </TrayCell>
          <TrayCell $w={38}>
            <svg width="20" height="14" viewBox="0 0 20 14"><rect x=".8" y=".8" width="16" height="12.400" rx="2.500" fill="none" stroke="#fff" strokeWidth="1.500" /><rect x="3" y="3" width="9.500" height="8" rx=".8" fill="#fff" /><path d="M18 4.500h2v5h-2z" fill="#fff" /></svg>
          </TrayCell>
          <TrayCell $w={89} $end><Fit w={53}>3:17 pm</Fit><Fit w={77}>02/07/2024</Fit></TrayCell>
          <TrayCell $w={38.5}>
            <svg width="18" height="20" viewBox="0 0 18 20" fill="#bfe6f0"><path d="M9 .5a6.200 6.200 0 0 1 6.200 6.200v5l1.800 3.500v1H1v-1l1.800-3.500v-5A6.200 6.200 0 0 1 9 .5zM6.300 17.200h5.400a2.700 2.300 0 0 1-5.400 0z" /></svg>
          </TrayCell>
          <CopilotCell><Copilot /><Overlay $x={18} $y={20}><Pre>PRE</Pre></Overlay></CopilotCell>
        </Tray>
      </Taskbar>
    </Screen>
  );
}
